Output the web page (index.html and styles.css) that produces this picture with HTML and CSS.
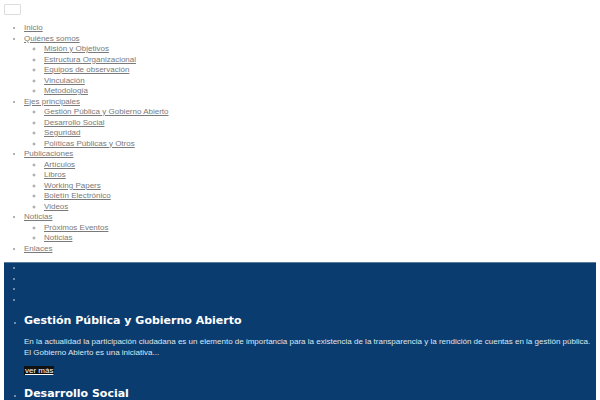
FILE: index.html
```html
<!DOCTYPE html>
<html lang="es">
<head>
<meta charset="utf-8">
<link rel="stylesheet" href="styles.css">
</head>
<body>
<button class="toggle" type="button"></button>
<ul class="menu">
  <li><a href="#">Inicio</a></li>
  <li><a href="#">Quiénes somos</a>
    <ul>
      <li><a href="#">Misión y Objetivos</a></li>
      <li><a href="#">Estructura Organizacional</a></li>
      <li><a href="#">Equipos de observación</a></li>
      <li><a href="#">Vinculación</a></li>
      <li><a href="#">Metodología</a></li>
    </ul>
  </li>
  <li><a href="#">Ejes principales</a>
    <ul>
      <li><a href="#">Gestión Pública y Gobierno Abierto</a></li>
      <li><a href="#">Desarrollo Social</a></li>
      <li><a href="#">Seguridad</a></li>
      <li><a href="#">Políticas Públicas y Otros</a></li>
    </ul>
  </li>
  <li><a href="#">Publicaciones</a>
    <ul>
      <li><a href="#">Artículos</a></li>
      <li><a href="#">Libros</a></li>
      <li><a href="#">Working Papers</a></li>
      <li><a href="#">Boletín Electrónico</a></li>
      <li><a href="#">Videos</a></li>
    </ul>
  </li>
  <li><a href="#">Noticias</a>
    <ul>
      <li><a href="#">Próximos Eventos</a></li>
      <li><a href="#">Noticias</a></li>
    </ul>
  </li>
  <li><a href="#">Enlaces</a></li>
</ul>
<section class="slider">
  <ul class="dots">
    <li></li><li></li><li></li><li></li>
  </ul>
  <ul class="slides">
    <li>
      <h2>Gestión Pública y Gobierno Abierto</h2>
      <p>En la actualidad la participación ciudadana es un elemento de importancia para la existencia de la transparencia y la rendición de cuentas en la gestión pública. El Gobierno Abierto es una iniciativa...</p>
      <a class="more" href="#">ver más</a>
    </li>
    <li>
      <h2>Desarrollo Social</h2>
      <p>El desarrollo social es un proceso que conduce al mejoramiento de las condiciones de vida de toda la población...</p>
      <a class="more" href="#">ver más</a>
    </li>
  </ul>
</section>
</body>
</html>
```
FILE: styles.css
```css
html, body {
  margin: 0;
  padding: 0;
  background: #fff;
}
body {
  padding: 4px;
  font-family: "Liberation Sans", Arial, sans-serif;
  font-size: 8px;
  line-height: 10.5px;
  color: #777;
}
.toggle {
  display: block;
  width: 17px;
  height: 11px;
  margin: 0;
  padding: 0;
  background: #fff;
  border: 1px solid #ddd;
  border-radius: 1px;
}
.menu {
  margin: 8px 0 0 0;
  padding-left: 20px;
}
.menu ul {
  margin: 0;
  padding-left: 20px;
  list-style-type: circle;
}
.menu li::marker {
  color: #999;
}
.menu a {
  color: #7a7a7a;
  text-decoration: underline;
}
.slider {
  margin-top: 8px;
  background: #0b3c6f;
  border-top: 1px solid #5a7d9f;
  color: #dfe6ee;
}
.dots {
  margin: 0;
  padding: 0 0 0 20px;
  height: 42px;
}
.dots li {
  height: 10.5px;
  color: #8fa6c0;
}
.slides {
  margin: 8px 0 0 0;
  padding: 0 4px 0 20px;
}
.slides > li {
  color: #8fa6c0;
  font-size: 6px;
}
.slides h2 {
  margin: 0;
  font-family: "DejaVu Sans", sans-serif;
  font-weight: bold;
  font-size: 11px;
  line-height: 16px;
  color: #fff;
}
.slides p {
  margin: 7px 0 8px 0;
  font-size: 8px;
  line-height: 11px;
  color: #dfe6ee;
}
.more {
  display: inline-block;
  background: #111;
  color: #fff;
  font-size: 8px;
  line-height: 9px;
  padding: 0 1px;
  text-decoration: underline;
  margin-bottom: 11px;
}
```
